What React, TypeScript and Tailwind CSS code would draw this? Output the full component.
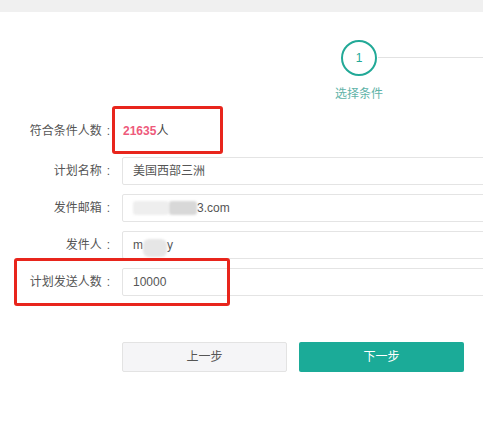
import React from "react";

function Label({ text }: { text: string }) {
  return (
    <div className="w-[118px] shrink-0 pr-[8px] text-right text-[12px] text-[#555] whitespace-nowrap">
      {text}
      <span className="ml-[5px]">:</span>
    </div>
  );
}

function Field({ label, children }: { label: string; children: React.ReactNode }) {
  return (
    <div className="flex items-center h-[28px]">
      <Label text={label} />
      <div className="ml-[4px] w-[400px] shrink-0 h-[28px] border border-[#e4e4e4] rounded-[2px] bg-white flex items-center pl-[10px] text-[12px] text-[#555]">
        {children}
      </div>
    </div>
  );
}

export default function App() {
  return (
    <div className="relative w-[483px] h-[427px] overflow-hidden bg-white font-['Liberation_Sans','Noto_Sans_CJK_SC',sans-serif]">
      {/* top bar */}
      <div className="h-[12px] bg-[#f0f0f0]"></div>

      {/* steps */}
      <div className="flex items-start pl-[341px] mt-[28px]">
        <div className="flex flex-col items-center w-[36px] shrink-0">
          <div className="w-[36px] h-[36px] rounded-full border-2 border-[#22a997] flex items-center justify-center text-[12px] text-[#22a997]">
            1
          </div>
          <div className="mt-[10px] text-[12px] leading-[16px] whitespace-nowrap text-[#5fb3a8]">选择条件</div>
        </div>
        <div className="flex-1 h-px bg-[#e2e2e2] mt-[17px] ml-[1px]"></div>
      </div>

      {/* form */}
      <div className="mt-[17px] flex flex-col">
        <div className="flex items-center h-[24px]">
          <Label text="符合条件人数" />
          <div className="ml-[5px] text-[12px] text-[#444]">
            <span className="font-bold text-[#ee5a7b]">21635</span>人
          </div>
        </div>

        <div className="mt-[14px] flex flex-col gap-[9px]">
          <Field label="计划名称">美国西部三洲</Field>
          <Field label="发件邮箱">
            <span className="w-[36px] h-[14px] rounded-[3px] bg-[#eeeeee] blur-[1px]"></span>
            <span className="w-[28px] h-[14px] rounded-[3px] bg-[#d8d8d8] blur-[1px]"></span>
            <span>3.com</span>
          </Field>
          <Field label="发件人">
            <span>m</span>
            <span className="w-[24px] h-[18px] mt-[6px] rounded-[6px] bg-[#e6e6e6] blur-[1px]"></span>
            <span>y</span>
          </Field>
          <Field label="计划发送人数">10000</Field>
        </div>

        {/* buttons */}
        <div className="mt-[46px] ml-[122px] flex gap-[12px]">
          <button className="w-[165px] h-[30px] rounded-[2px] border border-[#e3e3e3] bg-[#f5f5f7] text-[12px] text-[#555]">
            上一步
          </button>
          <button className="w-[165px] h-[30px] rounded-[2px] bg-[#1bab98] text-[12px] text-white">
            下一步
          </button>
        </div>
      </div>

      {/* red annotation boxes */}
      <div className="absolute left-[112px] top-[106px] w-[111px] h-[48px] border-[3px] border-[#e8251c] rounded-[3px]"></div>
      <div className="absolute left-[14px] top-[258px] w-[216px] h-[48px] border-[3px] border-[#e8251c] rounded-[3px]"></div>
    </div>
  );
}
